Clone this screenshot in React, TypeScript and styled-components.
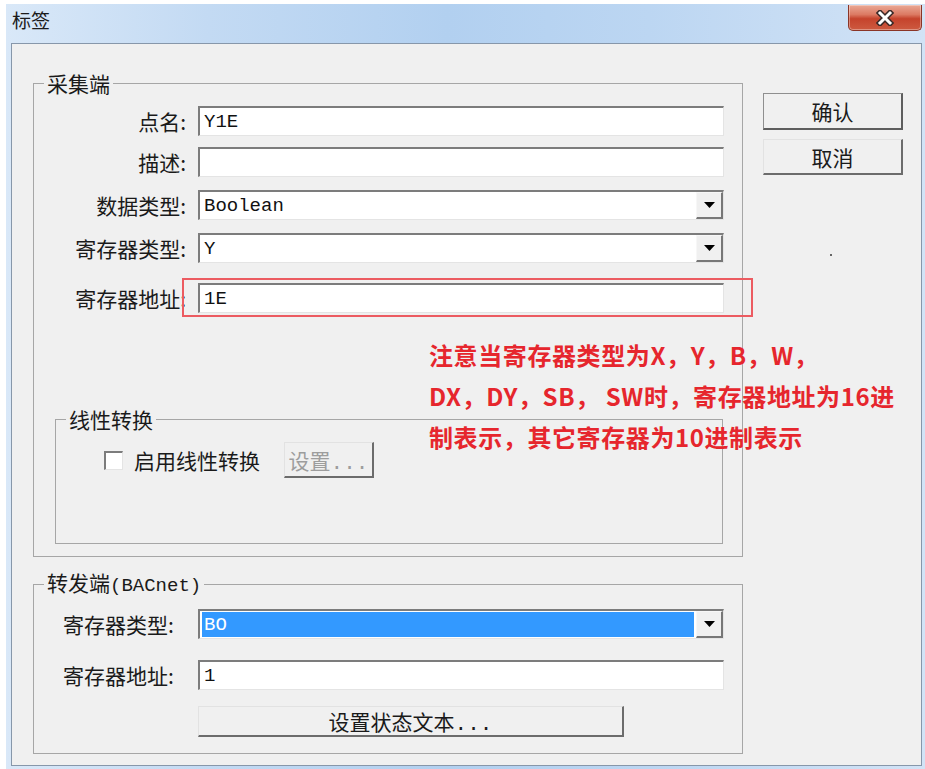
import React from "react";
import styled, { createGlobalStyle } from "styled-components";

const CJK = `"Noto Sans CJK SC", "Noto Sans", sans-serif`;
const MONO = `"Liberation Mono", "Noto Sans CJK SC", monospace`;

const GlobalStyle = createGlobalStyle`
  html, body { margin: 0; padding: 0; background: #ffffff; }
  body { font-family: ${CJK}; }
  * { box-sizing: border-box; }
`;

const Page = styled.div`
  position: relative;
  width: 925px;
  height: 769px;
  padding: 4px 0 0 6px;
  overflow: hidden;
  background: #ffffff;
`;

const Window = styled.div`
  width: 919px;
  height: 765px;
  display: flex;
  flex-direction: column;
  padding: 0 3px 3px 5px;
  background: linear-gradient(
    90deg,
    #d9e8f8 0%,
    #c3daf3 22%,
    #b2d0f0 48%,
    #bcd6f2 70%,
    #d2e3f6 100%
  );
`;

const TitleBar = styled.div`
  height: 39px;
  display: flex;
  align-items: flex-start;
  padding-left: 1px;
`;

const Title = styled.div`
  margin-top: 6px;
  font-family: ${CJK};
  font-size: 19px;
  line-height: 20px;
  color: #1b1b1b;
`;

const CloseButton = styled.div`
  margin-left: auto;
  margin-top: 1px;
  width: 74px;
  height: 26px;
  border: 1px solid #8a3527;
  border-top: none;
  border-radius: 0 0 5px 5px;
  background: linear-gradient(
    180deg,
    #eaa996 0%,
    #dc7a63 38%,
    #c5432c 55%,
    #cd5a40 100%
  );
  box-shadow: inset 0 0 0 1px rgba(255, 255, 255, 0.35);
  display: flex;
  align-items: center;
  justify-content: center;
`;

const Client = styled.div`
  flex: 1;
  display: flex;
  align-items: flex-start;
  border: 1px solid #8797aa;
  background: #f0f0f0;
  padding: 29px 0 0 21px;
`;

const LeftCol = styled.div`
  width: 710px;
  display: flex;
  flex-direction: column;
  gap: 15px;
`;

const RightCol = styled.div`
  margin-left: 20px;
  width: 140px;
  padding-top: 20px;
  display: flex;
  flex-direction: column;
  gap: 9px;
`;

const Group = styled.fieldset`
  margin: 0;
  min-width: 0;
  border: 1px solid #a6a6a6;
  border-radius: 0;
`;

const Legend = styled.legend`
  margin-left: 10px;
  padding: 0 3px;
  font-family: ${CJK};
  font-size: 21px;
  line-height: 20px;
  color: #1a1a1a;
`;

const CollectGroup = styled(Group)`
  padding: 13px 18px 12px 0;
`;

const LinearGroup = styled(Group)`
  margin: 96px 1px 0 21px;
  padding: 13px 0 65px 0;
`;

const ForwardGroup = styled(Group)`
  padding: 13px 18px 16px 0;
`;

const Row = styled.div<{ $mt?: number; $pl?: number }>`
  display: flex;
  align-items: center;
  margin-top: ${(p) => p.$mt ?? 0}px;
  padding-left: ${(p) => p.$pl ?? 0}px;
`;

const Label = styled.div<{ $w: number; $align?: "left" | "right"; $gap?: number }>`
  width: ${(p) => p.$w}px;
  margin-right: ${(p) => p.$gap ?? 0}px;
  flex: none;
  text-align: ${(p) => p.$align ?? "right"};
  font-family: ${CJK};
  font-size: 21px;
  line-height: 24px;
  color: #1a1a1a;
  white-space: nowrap;
`;

const Latin = styled.span`
  font-family: ${MONO};
  font-size: 19px;
`;

const TextBox = styled.div`
  width: 526px;
  height: 30px;
  display: flex;
  align-items: center;
  padding-left: 4px;
  background: #ffffff;
  border-style: solid;
  border-width: 2px 1px 1px 2px;
  border-color: #7c7c7c #e4e4e4 #e4e4e4 #7c7c7c;
  font-family: ${MONO};
  font-size: 19px;
  color: #111;
`;

const Combo = styled.div`
  width: 526px;
  height: 30px;
  display: flex;
  background: #ffffff;
  border-style: solid;
  border-width: 2px 1px 1px 2px;
  border-color: #7c7c7c #e4e4e4 #e4e4e4 #7c7c7c;
`;

const ComboValue = styled.div<{ $selected?: boolean }>`
  flex: 1;
  display: flex;
  align-items: center;
  margin: ${(p) => (p.$selected ? "1px 2px 1px 2px" : "0")};
  padding-left: ${(p) => (p.$selected ? "2px" : "4px")};
  background: ${(p) => (p.$selected ? "#3399ff" : "transparent")};
  color: ${(p) => (p.$selected ? "#ffffff" : "#111111")};
  font-family: ${MONO};
  font-size: 19px;
`;

const DropButton = styled.div`
  width: 27px;
  flex: none;
  display: flex;
  align-items: center;
  justify-content: center;
  background: #f0f0f0;
  border-style: solid;
  border-width: 1px 2px 2px 1px;
  border-color: #f7f7f7 #777777 #777777 #f7f7f7;
`;

const PushButton = styled.div<{
  $w?: number;
  $h: number;
  $default?: boolean;
  $disabled?: boolean;
}>`
  width: ${(p) => (p.$w ? `${p.$w}px` : "100%")};
  height: ${(p) => p.$h}px;
  display: flex;
  align-items: center;
  justify-content: center;
  background: #f0f0f0;
  border-style: solid;
  border-width: 1px 2px 2px 1px;
  border-color: ${(p) =>
    p.$default
      ? "#8f8f8f #5e5e5e #5e5e5e #8f8f8f"
      : "#e2e2e2 #6c6c6c #6c6c6c #e2e2e2"};
  font-family: ${MONO};
  font-size: 21px;
  color: ${(p) => (p.$disabled ? "#9d9d9d" : "#1a1a1a")};
  white-space: nowrap;
`;

const CheckRow = styled.div`
  display: flex;
  align-items: center;
  padding-left: 48px;
`;

const CheckBox = styled.div`
  width: 19px;
  height: 19px;
  flex: none;
  background: #ffffff;
  border-style: solid;
  border-width: 2px 1px 1px 2px;
  border-color: #7c7c7c #e4e4e4 #e4e4e4 #7c7c7c;
`;

const CheckLabel = styled.div`
  margin-left: 11px;
  margin-right: 24px;
  font-family: ${CJK};
  font-size: 21px;
  line-height: 24px;
  color: #1a1a1a;
`;

const ButtonRow = styled.div`
  margin-top: 16px;
  padding-left: 164px;
`;

const Dot = styled.div`
  width: 2px;
  height: 2px;
  margin: 70px 0 0 67px;
  background: #666;
`;

const HighlightBox = styled.div`
  position: absolute;
  left: 182px;
  top: 278px;
  width: 571px;
  height: 39px;
  border: 2px solid #ec5b61;
  pointer-events: none;
`;

const Note = styled.div`
  position: absolute;
  left: 429px;
  top: 334px;
  font-family: ${CJK};
  font-weight: 700;
  font-size: 24px;
  line-height: 41px;
  letter-spacing: 0.6px;
  color: #e6262d;
  white-space: nowrap;
`;

const Arrow = () => (
  <svg width="11" height="6" viewBox="0 0 11 6">
    <path d="M0 0 H11 L5.5 6 Z" fill="#000" />
  </svg>
);

const CloseX = () => (
  <svg width="18" height="16" viewBox="0 0 18 16">
    <g strokeLinecap="square">
      <path d="M4 3 L14 13 M14 3 L4 13" stroke="#3a2a28" strokeWidth="6" />
      <path d="M4 3 L14 13 M14 3 L4 13" stroke="#ffffff" strokeWidth="3" />
    </g>
  </svg>
);

export default function App() {
  return (
    <>
      <GlobalStyle />
      <Page>
        <Window>
          <TitleBar>
            <Title>标签</Title>
            <CloseButton>
              <CloseX />
            </CloseButton>
          </TitleBar>
          <Client>
            <LeftCol>
              <CollectGroup>
                <Legend>采集端</Legend>
                <Row>
                  <Label $w={152} $gap={12}>点名:</Label>
                  <TextBox>Y1E</TextBox>
                </Row>
                <Row $mt={11}>
                  <Label $w={152} $gap={12}>描述:</Label>
                  <TextBox />
                </Row>
                <Row $mt={13}>
                  <Label $w={152} $gap={12}>数据类型:</Label>
                  <Combo>
                    <ComboValue>Boolean</ComboValue>
                    <DropButton>
                      <Arrow />
                    </DropButton>
                  </Combo>
                </Row>
                <Row $mt={13}>
                  <Label $w={152} $gap={12}>寄存器类型:</Label>
                  <Combo>
                    <ComboValue>Y</ComboValue>
                    <DropButton>
                      <Arrow />
                    </DropButton>
                  </Combo>
                </Row>
                <Row $mt={20}>
                  <Label $w={152} $gap={12}>寄存器地址:</Label>
                  <TextBox>1E</TextBox>
                </Row>
                <LinearGroup>
                  <Legend>线性转换</Legend>
                  <CheckRow>
                    <CheckBox />
                    <CheckLabel>启用线性转换</CheckLabel>
                    <PushButton $w={90} $h={36} $disabled>
                      设置...
                    </PushButton>
                  </CheckRow>
                </LinearGroup>
              </CollectGroup>

              <ForwardGroup>
                <Legend>
                  转发端<Latin>(BACnet)</Latin>
                </Legend>
                <Row $pl={29}>
                  <Label $w={135} $align="left">寄存器类型:</Label>
                  <Combo>
                    <ComboValue $selected>BO</ComboValue>
                    <DropButton>
                      <Arrow />
                    </DropButton>
                  </Combo>
                </Row>
                <Row $mt={21} $pl={29}>
                  <Label $w={135} $align="left">寄存器地址:</Label>
                  <TextBox>1</TextBox>
                </Row>
                <ButtonRow>
                  <PushButton $w={426} $h={31}>
                    设置状态文本...
                  </PushButton>
                </ButtonRow>
              </ForwardGroup>
            </LeftCol>

            <RightCol>
              <PushButton $h={37} $default>
                确认
              </PushButton>
              <PushButton $h={36}>取消</PushButton>
              <Dot />
            </RightCol>
          </Client>
        </Window>

        <HighlightBox />
        <Note>
          <div>注意当寄存器类型为X，Y，B，W，</div>
          <div>DX，DY，SB， SW时，寄存器地址为16进</div>
          <div>制表示，其它寄存器为10进制表示</div>
        </Note>
      </Page>
    </>
  );
}
